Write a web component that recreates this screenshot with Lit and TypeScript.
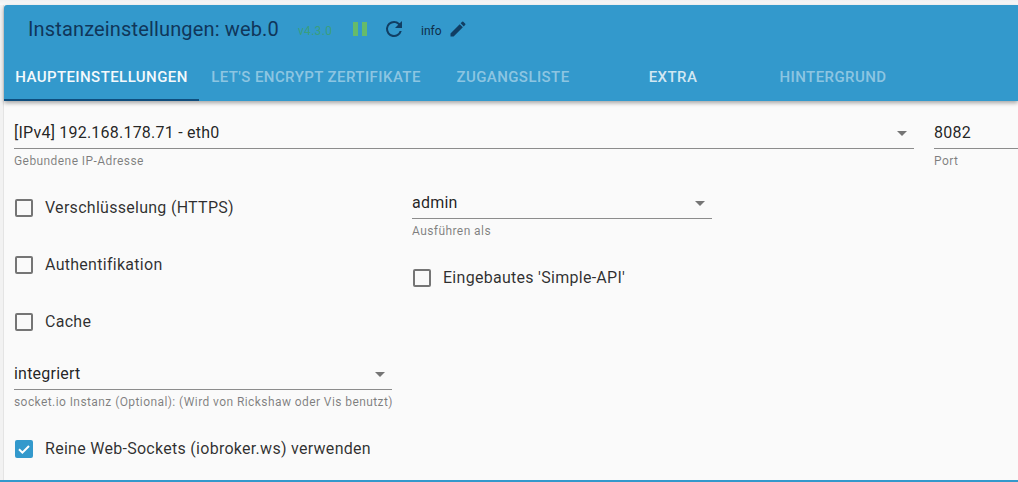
import { LitElement, html, css } from "lit";
import { customElement } from "lit/decorators.js";

const arrow = html`<svg class="arrow" viewBox="0 0 10 5"><path d="M0 0h10L5 5z"/></svg>`;

@customElement("app-root")
export class AppRoot extends LitElement {
  static styles = css`
    :host { display: block; width: 1018px; height: 482px; overflow: hidden; background: #fafafa;
      font-family: Roboto, "Liberation Sans", sans-serif; color: rgba(0,0,0,.87); }
    .page { box-sizing: border-box; height: 482px; padding: 5px 0 0 4px; display: flex; flex-direction: column;
      border-left: 0; background: linear-gradient(#eef0f2, #fafafa 5px); }
    .frame { flex: 1; display: flex; flex-direction: column; min-height: 0; border-bottom: 2px solid #3399cc; margin-left: -4px; padding-left: 4px;
      box-shadow: inset 3px 0 0 #f2f2f2, inset 4px 0 0 #e4e4e4; }
    .bar { background: #3399cc; height: 96px; flex: none; border-radius: 3px 0 0 0; display: flex; flex-direction: column;
      box-shadow: 0 2px 4px rgba(0,0,0,.35); }
    .title { height: 48px; display: flex; align-items: center; padding-left: 24px; color: #0f3a5c; }
    h1 { margin: 0; font-weight: 400; font-size: 20px; letter-spacing: .15px; line-height: 47px; width: 270px; white-space: nowrap; color: #10365a; }
    .ver { font-size: 12px; letter-spacing: .3px; color: #3a9f7e; width: 55px; margin-top: 3px; }
    .pause { width: 14px; height: 14px; margin-right: 15px; }
    .reload { width: 24px; height: 24px; margin-right: 15px; fill: #113e63; }
    .info { font-size: 12px; color: #0f2f4a; margin-right: 6px; margin-top: 3px; }
    .pen { width: 20px; height: 20px; fill: #113e63; }
    .tabs { display: flex; height: 48px; }
    .tab { box-sizing: border-box; height: 48px; display: flex; align-items: center; justify-content: center;
      font-size: 15px; letter-spacing: .43px; font-weight: 500; color: rgba(255,255,255,.45); white-space: nowrap; flex: none; }
    .tab.active { color: #fff; opacity: .95; box-shadow: inset 0 -2px 0 #0e4a7a; }
    .tab.extra { color: rgba(255,255,255,.78); }
    .body { flex: 1; min-height: 0; padding: 19px 0 0 10px; display: flex; flex-direction: column; }
    .row { display: flex; gap: 20px; }
    .field { flex: none; }
    .val { box-sizing: border-box; height: 29px; border-bottom: 1px solid #8c8c8c; font-size: 16px; letter-spacing: .22px; display: flex;
      align-items: center; justify-content: space-between; padding: 0 7px 4px 0; white-space: nowrap; }
    .help { font-size: 12px; letter-spacing: .42px; color: rgba(0,0,0,.5); margin-top: 5px; line-height: 14px; white-space: nowrap; }
    .arrow { width: 10px; height: 5px; fill: #757575; margin-top: 3px; }
    .cols { display: flex; gap: 20px; margin-top: 27px; }
    .left { width: 378px; flex: none; display: flex; flex-direction: column; }
    .right { display: flex; flex-direction: column; margin-top: -5px; }
    .check { display: flex; align-items: center; height: 24px; font-size: 16px; letter-spacing: .28px; gap: 12px; white-space: nowrap; color: rgba(0,0,0,.82); }
    .left .check { margin-bottom: 33px; }
    .box { width: 18px; height: 18px; box-sizing: border-box; border: 2px solid #757575; border-radius: 2px; flex: none; margin-left: 1px; margin-top: 1px; }
    .box.on { background: #3399cc; border: 0; display: flex; align-items: center; justify-content: center; }
    .box.on svg { width: 14px; height: 14px; fill: none; stroke: #fff; stroke-width: 2; }
    .sock { width: 378px; margin-top: -5px; }
    .ws { margin-top: 27px; }
    .admin { width: 300px; }
    .api { margin-top: 27px; }
  `;

  private check(label: string, on = false, cls = "") {
    return html`<label class="check ${cls}"><span class="box ${on ? "on" : ""}">${on ? html`<svg viewBox="0 0 14 14"><path d="M2 7.2l3.4 3.4L12 4"/></svg>` : ""}</span>${label}</label>`;
  }

  render() {
    return html`<div class="page"><div class="frame">
      <header class="bar">
        <div class="title">
          <h1>Instanzeinstellungen: web.0</h1>
          <span class="ver">v4.3.0</span>
          <svg class="pause" viewBox="0 0 14 14"><rect x="0" width="5" height="14" fill="#66bb6a"/><rect x="9" width="5" height="14" fill="#66bb6a"/></svg>
          <svg class="reload" viewBox="0 0 24 24"><path d="M17.65 6.35A7.96 7.96 0 0 0 12 4a8 8 0 1 0 7.73 10h-2.08A6 6 0 1 1 12 6c1.66 0 3.14.69 4.22 1.78L13 11h7V4l-2.35 2.35z"/></svg>
          <span class="info">info</span>
          <svg class="pen" viewBox="0 0 24 24"><path d="M3 17.25V21h3.75L17.81 9.94l-3.75-3.75L3 17.25zM20.71 7.04a1 1 0 0 0 0-1.41l-2.34-2.34a1 1 0 0 0-1.41 0l-1.83 1.83 3.75 3.75 1.83-1.83z"/></svg>
        </div>
        <nav class="tabs">
          <div class="tab active" style="width:195px">HAUPTEINSTELLUNGEN</div>
          <div class="tab" style="width:234px">LET'S ENCRYPT ZERTIFIKATE</div>
          <div class="tab" style="width:160px">ZUGANGSLISTE</div>
          <div class="tab extra" style="width:160px">EXTRA</div>
          <div class="tab" style="width:160px">HINTERGRUND</div>
        </nav>
      </header>
      <main class="body">
        <div class="row">
          <div class="field" style="width:900px"><div class="val">[IPv4] 192.168.178.71 - eth0 ${arrow}</div><div class="help">Gebundene IP-Adresse</div></div>
          <div class="field" style="width:100px"><div class="val">8082</div><div class="help">Port</div></div>
        </div>
        <div class="cols">
          <div class="left">
            ${this.check("Verschlüsselung (HTTPS)")}
            ${this.check("Authentifikation")}
            ${this.check("Cache")}
            <div class="field sock"><div class="val">integriert ${arrow}</div><div class="help">socket.io Instanz (Optional): (Wird von Rickshaw oder Vis benutzt)</div></div>
            ${this.check("Reine Web-Sockets (iobroker.ws) verwenden", true, "ws")}
          </div>
          <div class="right">
            <div class="field admin"><div class="val">admin ${arrow}</div><div class="help">Ausführen als</div></div>
            ${this.check("Eingebautes 'Simple-API'", false, "api")}
          </div>
        </div>
      </main>
    </div></div>`;
  }
}
